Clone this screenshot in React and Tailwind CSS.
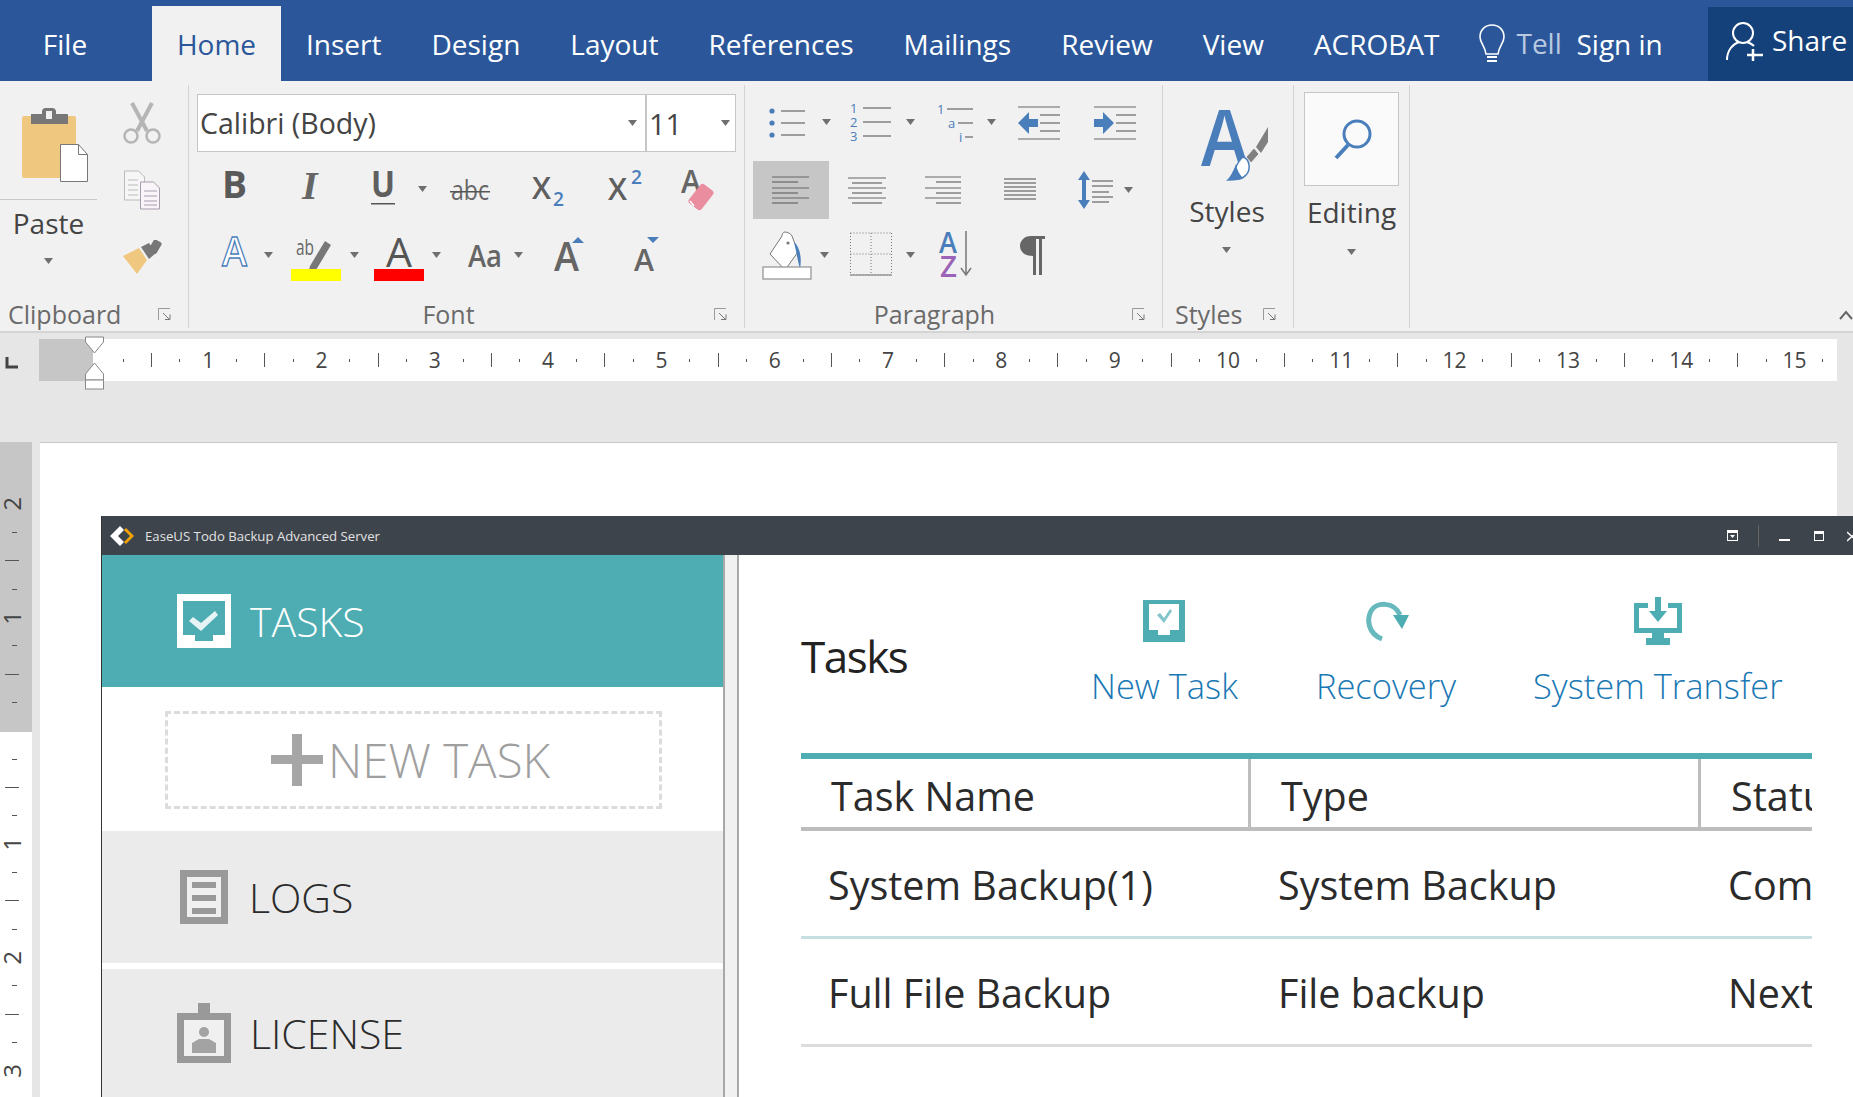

const B = '#4a7ebb', G = '#666666', TE = '#4dadb3';

function T({ x, y, size, fill = G, weight = 400, w, style, children }) {
  return (
    <text x={x} y={y} fontSize={size} fill={fill} fontWeight={weight} fontStyle={style}
      textLength={w} lengthAdjust={w ? 'spacingAndGlyphs' : undefined}>{children}</text>
  );
}

function Caret({ className = '' }) {
  return (
    <svg width="9" height="6" viewBox="0 0 9 6" className={'shrink-0 ' + className}>
      <polygon points="0,0 9,0 4.5,6" fill="#6f6f6f" />
    </svg>
  );
}

function Launcher() {
  return (
    <svg width="14" height="14" viewBox="0 0 14 14" className="shrink-0">
      <path d="M0.5 12V0.5H12" fill="none" stroke="#9a9a9a" />
      <path d="M5 5L11 11M7 11.5h5v-5" fill="none" stroke="#777" />
    </svg>
  );
}

function GroupLabel({ children, className = 'justify-center' }) {
  return (
    <div className={'relative mt-auto flex h-[26px] shrink-0 items-center pb-[2px] text-[25px] leading-none text-[#6a6a6a] ' + className}>
      <span>{children}</span>
      <span className="absolute right-[16px] top-[6px] flex"><Launcher /></span>
    </div>
  );
}

function Lines({ rows, stroke = G }) {
  return rows.map(([x1, x2, y], i) => <line key={i} x1={x1} x2={x2} y1={y} y2={y} stroke={stroke} strokeWidth="1.2" />);
}

function Clipboard() {
  return (
    <div className="flex h-[243px] w-[189px] shrink-0 flex-col border-r border-[#d4d4d4]">
      <div className="flex">
        <div className="flex w-[97px] flex-col items-center">
          <svg width="68" height="74" viewBox="0 0 68 74" className="ml-[13px] mt-[23px] shrink-0">
            <rect x="1" y="8" width="54" height="62" rx="2" fill="#efc77f" />
            <path d="M10 6h11V3a4 4 0 0 1 4-3h6a4 4 0 0 1 4 3v3h11a1 1 0 0 1 1 1v9H10z" fill="#777" />
            <rect x="25" y="3" width="6" height="8" fill="#f1f1f1" />
            <path d="M39.5 36.5h18l9 10v27h-27z" fill="#fff" stroke="#777" />
            <path d="M57.5 36.5v10h9" fill="none" stroke="#777" />
          </svg>
          <div className="mt-[17px] h-px w-full shrink-0 bg-[#c8c8c8]" />
          <div className="mt-[3px] flex h-[40px] items-center text-[28px] leading-none text-[#444]">Paste</div>
          <Caret className="mt-[15px]" />
        </div>
        <div className="ml-[26px] flex w-[40px] flex-col">
          <svg width="38" height="43" viewBox="0 0 38 43" className="mt-[17px] shrink-0">
            <path d="M9 1L24 29M29 1L14 29" stroke="#b5b5b5" strokeWidth="4" fill="none" />
            <circle cx="8" cy="34" r="6.5" fill="none" stroke="#b5b5b5" strokeWidth="2.5" />
            <circle cx="30" cy="34" r="6.5" fill="none" stroke="#b5b5b5" strokeWidth="2.5" />
          </svg>
          <svg width="38" height="40" viewBox="0 0 38 40" className="mt-[25px] shrink-0">
            <path d="M1.5 1h14l6 6v23h-20z" fill="#f6f6f6" stroke="#bbb" />
            <path d="M17.5 12h13l6 6v21h-19z" fill="#f8f4f8" stroke="#a89cad" />
            <path d="M5 10h10M5 15h10M5 20h10M5 25h10" stroke="#bbb" />
            <path d="M21 21h13M21 26h13M21 31h13M21 35h13" stroke="#a89cad" />
          </svg>
          <svg width="40" height="34" viewBox="0 0 40 34" className="mt-[30px] shrink-0">
            <polygon points="0,16 16,8 24,20 14,34" fill="#efc77f" />
            <polygon points="18,7 26,3 33,13 26,19" fill="#777" />
            <rect x="28" y="0" width="9" height="13" rx="2" transform="rotate(30 32 6)" fill="#777" />
          </svg>
        </div>
      </div>
      <GroupLabel className="justify-start pl-[8px]">Clipboard</GroupLabel>
    </div>
  );
}

function FontGroup() {
  return (
    <div className="flex h-[243px] w-[556px] shrink-0 flex-col border-r border-[#d4d4d4]">
      <div className="ml-[8px] mt-[9px] flex h-[58px] w-[539px] shrink-0 border border-[#c6c6c6] bg-white text-[#444]">
        <div className="flex flex-1 items-center justify-between border-r-2 border-[#c6c6c6] pr-[8px]">
          <span className="pl-[2px] text-[28.5px] leading-none">Calibri (Body)</span>
          <Caret />
        </div>
        <div className="flex w-[88px] items-center justify-between pr-[5px]">
          <span className="pl-[2px] text-[29px] leading-none">11</span>
          <Caret />
        </div>
      </div>
      <div className="mt-[15px] flex h-[44px] shrink-0 items-center">
        <svg width="26" height="44" className="ml-[33px] shrink-0"><T x="0" y="31" size="38" weight="700" fill="#5a5a5a" w="25">B</T></svg>
        <svg width="26" height="44" className="ml-[53px] shrink-0"><text x="1" y="32" fontSize="40" fontWeight="700" fontStyle="italic" fill="#666" style={{ fontFamily: '"Liberation Serif", serif' }}>I</text></svg>
        <svg width="28" height="44" className="ml-[43px] shrink-0"><T x="1" y="30" size="36" weight="700" fill="#5f5f5f" w="24">U</T><rect x="1" y="36" width="24" height="1.5" fill="#555" /></svg>
        <Caret className="ml-[20px]" />
        <svg width="42" height="44" className="ml-[23px] shrink-0"><T x="1" y="33" size="27" fill="#666" w="38">abc</T><rect x="0" y="24" width="40" height="1.5" fill="#555" /></svg>
        <svg width="36" height="44" className="ml-[40px] shrink-0"><T x="0" y="32" size="30" weight="600" fill="#5f5f5f" w="19">X</T><T x="21" y="39" size="19" weight="600" fill={B} w="11">2</T></svg>
        <svg width="38" height="44" className="ml-[40px] shrink-0"><T x="0" y="33" size="30" weight="600" fill="#5f5f5f" w="19">X</T><T x="23" y="17" size="19" weight="600" fill={B} w="11">2</T></svg>
        <svg width="38" height="46" className="ml-[35px] shrink-0">
          <T x="0" y="27" size="33" weight="600" fill="#666" w="20">A</T>
          <rect x="12" y="19" width="16" height="24" rx="3" transform="rotate(38 20 31)" fill="#ea8d9e" />
          <path d="M9 35l4 5" stroke="#fff" strokeWidth="1.5" />
        </svg>
      </div>
      <div className="mt-[17px] flex h-[54px] shrink-0 items-center">
        <svg width="28" height="54" className="ml-[32px] shrink-0"><text x="1" y="38" fontSize="40" fontWeight="600" fill="#fff" stroke={B} strokeWidth="1.3" textLength="25" lengthAdjust="spacingAndGlyphs">A</text></svg>
        <Caret className="ml-[15px]" />
        <svg width="50" height="54" className="ml-[18px] shrink-0">
          <T x="5" y="27" size="22" fill="#666" w="18">ab</T>
          <polygon points="19,38 34,13 40,17 25,42 18,42" fill="#777" />
          <rect x="0" y="41" width="50" height="12" fill="#ffff00" />
        </svg>
        <Caret className="ml-[9px]" />
        <svg width="50" height="54" className="ml-[15px] shrink-0">
          <T x="12" y="39" size="41" weight="400" fill="#555" w="26">A</T>
          <rect x="0" y="41" width="50" height="12" fill="#ff0000" />
        </svg>
        <Caret className="ml-[8px]" />
        <svg width="36" height="54" className="ml-[27px] shrink-0"><T x="0" y="39" size="31" weight="600" fill="#666" w="34">Aa</T></svg>
        <Caret className="ml-[10px]" />
        <svg width="32" height="54" className="ml-[31px] shrink-0">
          <T x="0" y="43" size="40" weight="600" fill="#666" w="25">A</T>
          <polygon points="18,15 30,15 24,9" fill={B} />
        </svg>
        <svg width="32" height="54" className="ml-[47px] shrink-0">
          <T x="1" y="43" size="30" weight="600" fill="#666" w="20">A</T>
          <polygon points="14,9 26,9 20,15" fill={B} />
        </svg>
      </div>
      <GroupLabel className="justify-center pr-[36px]">Font</GroupLabel>
    </div>
  );
}

function ListArrow({ dir }) {
  return dir === 'l'
    ? <polygon points="0,23 11,12 11,19 20,19 20,27 11,27 11,34" fill={B} />
    : <polygon points="20,23 9,12 9,19 0,19 0,27 9,27 9,34" fill={B} />;
}

function ParagraphGroup() {
  return (
    <div className="flex h-[243px] w-[418px] shrink-0 flex-col border-r border-[#d4d4d4]">
      <div className="mt-[17px] flex h-[40px] shrink-0 items-center">
        <svg width="38" height="40" className="ml-[23px] shrink-0">
          <circle cx="4" cy="9" r="2.6" fill={B} /><circle cx="4" cy="21" r="2.6" fill={B} /><circle cx="4" cy="33" r="2.6" fill={B} />
          <Lines rows={[[13, 37, 9], [13, 37, 21], [13, 37, 33]]} />
        </svg>
        <Caret className="ml-[16px]" />
        <svg width="42" height="40" className="ml-[19px] shrink-0">
          <T x="0" y="11" size="13" fill={B}>1</T><T x="0" y="25" size="13" fill={B}>2</T><T x="0" y="39" size="13" fill={B}>3</T>
          <Lines rows={[[13, 41, 6], [13, 41, 20], [13, 41, 34]]} />
        </svg>
        <Caret className="ml-[14px]" />
        <svg width="40" height="40" className="ml-[22px] shrink-0">
          <T x="0" y="12" size="13" fill={B}>1</T><T x="11" y="26" size="13" fill={B}>a</T><T x="22" y="40" size="13" fill={B}>i</T>
          <Lines rows={[[10, 36, 7], [21, 36, 21], [28, 36, 35]]} />
        </svg>
        <Caret className="ml-[10px]" />
        <svg width="43" height="40" className="ml-[22px] shrink-0">
          <Lines rows={[[0, 42, 5], [22, 42, 13], [22, 42, 21], [22, 42, 29], [0, 42, 37]]} />
          <g transform="translate(0,-2)"><ListArrow dir="l" /></g>
        </svg>
        <svg width="43" height="40" className="ml-[33px] shrink-0">
          <Lines rows={[[0, 42, 5], [22, 42, 13], [22, 42, 21], [22, 42, 29], [0, 42, 37]]} />
          <g transform="translate(0,-2)"><ListArrow dir="r" /></g>
        </svg>
      </div>
      <div className="mt-[19px] flex h-[58px] shrink-0 items-center">
        <div className="ml-[8px] flex h-[58px] w-[76px] items-center justify-center bg-[#c6c6c6]">
          <svg width="38" height="30" className="shrink-0"><Lines rows={[[0, 37, 2], [0, 26, 7], [0, 37, 13], [0, 26, 18], [0, 37, 23], [0, 26, 28]]} /></svg>
        </div>
        <svg width="40" height="30" className="ml-[18px] shrink-0"><Lines rows={[[1, 39, 3], [5, 35, 8], [1, 39, 13], [5, 35, 18], [1, 39, 23], [5, 35, 28]]} /></svg>
        <svg width="37" height="30" className="ml-[38px] shrink-0"><Lines rows={[[0, 36, 2], [11, 36, 7], [0, 36, 13], [11, 36, 18], [0, 36, 23], [11, 36, 28]]} /></svg>
        <svg width="33" height="24" className="ml-[42px] shrink-0"><Lines rows={[[0, 32, 1], [0, 32, 5], [0, 32, 9], [0, 32, 13], [0, 32, 17], [0, 32, 21]]} /></svg>
        <svg width="37" height="38" className="ml-[40px] shrink-0">
          <path d="M7 0L1 9h4v20H1l6 9 6-9H9V9h4z" fill={B} />
          <Lines rows={[[15, 36, 10], [15, 36, 15], [15, 32, 21], [15, 36, 26], [15, 32, 31]]} />
        </svg>
        <Caret className="ml-[10px]" />
      </div>
      <div className="mt-[11px] flex h-[50px] shrink-0 items-center">
        <svg width="52" height="50" className="ml-[17px] shrink-0">
          <path d="M23 2c-2 0-3 2-3 4l-12 18 15 16 13-18-6-16c-1-2-4-4-7-4z" fill="#fff" stroke="#777" />
          <circle cx="26" cy="13" r="1.6" fill="#777" />
          <path d="M32 12c6 5 8 16 6 27c-2-7-3-14-6-27z" fill={B} />
          <rect x="1" y="37" width="48" height="12" fill="#fff" stroke="#999" strokeWidth="1.3" />
        </svg>
        <Caret className="ml-[6px]" />
        <svg width="42" height="50" className="ml-[21px] shrink-0">
          <path d="M0.5 3H41.5M0.5 45H41.5M21 3V45M0.5 24H41.5M0.5 3V45M41.5 3V45" stroke="#777" strokeDasharray="1 2" fill="none" />
          <path d="M0 45H42" stroke="#777" />
        </svg>
        <Caret className="ml-[14px]" />
        <svg width="36" height="50" className="ml-[24px] shrink-0">
          <T x="0" y="23" size="28" weight="600" fill={B} w="18">A</T>
          <T x="1" y="47" size="28" weight="600" fill="#9b63b8" w="17">Z</T>
          <path d="M27 1V45M22 38l5 7 5-7" stroke="#777" fill="none" strokeWidth="1.5" />
        </svg>
        <svg width="28" height="44" className="ml-[44px] shrink-0">
          <path d="M12 3h14v3h-3v36h-3V6h-3v36h-3V23C5 23 1 18 1 13S5 3 12 3z" fill="#666" />
        </svg>
      </div>
      <GroupLabel className="justify-center pr-[38px]">Paragraph</GroupLabel>
    </div>
  );
}

function StylesGroup() {
  return (
    <div className="flex h-[243px] w-[131px] shrink-0 flex-col border-r border-[#d4d4d4]">
      <svg width="72" height="72" className="ml-[36px] mt-[25px] shrink-0">
        <T x="2" y="56" size="82" weight="600" fill={B} w="47">A</T>
        <polygon points="57,37 69,17 69,32 62,43" fill="#808080" />
        <polygon points="47,47 55,38 60,44 52,53" fill="#808080" stroke="#f1f1f1" strokeWidth="1" />
        <path d="M44 47c7 2 8 13 3 18c-4 5-12 5-18 5c6-5 8-18 15-23z" fill="#fff" stroke={B} strokeWidth="1.5" />
        <path d="M37 54c1 6 3 10 7 14c-4 2-10 2-15 2c4-4 6-10 8-16z" fill={B} />
      </svg>
      <div className="mt-[11px] flex h-[36px] shrink-0 items-center justify-center pr-[2px] text-[28px] leading-none text-[#444]">Styles</div>
      <div className="mt-[18px] flex justify-center pr-[3px]"><Caret /></div>
      <GroupLabel className="justify-start pl-[12px]">Styles</GroupLabel>
    </div>
  );
}

function EditingGroup() {
  return (
    <div className="flex h-[243px] w-[116px] shrink-0 flex-col items-center border-r border-[#d4d4d4]">
      <div className="mt-[7px] flex h-[94px] w-[95px] shrink-0 items-center justify-center border border-[#c6c6c6] bg-[#fafafa]">
        <svg width="42" height="42" viewBox="0 0 42 42" className="shrink-0">
          <circle cx="26" cy="16" r="13" fill="none" stroke={B} strokeWidth="3" />
          <path d="M17 27L5 40" stroke={B} strokeWidth="4" />
        </svg>
      </div>
      <div className="mt-[8px] flex h-[36px] shrink-0 items-center text-[28px] leading-none text-[#444]">Editing</div>
      <div className="mt-[19px] flex"><Caret /></div>
    </div>
  );
}

const TICK_S = <span className="h-[3px] w-px bg-[#555]" />;
const TICK_L = <span className="h-[14px] w-px bg-[#555]" />;

function HRuler() {
  const cells = [];
  for (let n = 1; n <= 15; n++) {
    cells.push('s', 'l', 's', n);
  }
  cells.push('s');
  return (
    <div className="relative flex h-[42px] items-center">
      <div className="ml-[5px] flex h-[42px] w-[34px] items-center">
        <svg width="14" height="14" className="mt-[6px] shrink-0"><path d="M2 1V11H13" fill="none" stroke="#444" strokeWidth="3" /></svg>
      </div>
      <div className="h-[42px] w-[54px] bg-[#c6c6c6]" />
      <div className="flex h-[42px] w-[1744px] items-center overflow-hidden bg-white pl-[16px]">
        {cells.map((c, i) => (
          <div key={i} className="flex h-[42px] w-[28.33px] shrink-0 items-center justify-center text-[21px] leading-none text-[#444]">
            {c === 's' ? TICK_S : c === 'l' ? TICK_L : c}
          </div>
        ))}
      </div>
      <svg width="24" height="56" viewBox="0 0 24 56" className="absolute left-[83px] top-[-3px]">
        <path d="M2.5 1H20.5V6L11.5 17L2.5 6Z" fill="#fff" stroke="#888" />
        <path d="M2.5 38L11.5 27L20.5 38V44H2.5Z" fill="#fff" stroke="#888" />
        <rect x="2.5" y="44" width="18" height="9" fill="#fff" stroke="#888" />
      </svg>
    </div>
  );
}

function VRuler() {
  const mark = (c, i) => (
    <div key={i} className="flex h-[28.35px] w-[24px] shrink-0 items-center justify-center text-[24px] leading-none text-[#444]">
      {c === 's' ? <span className="ml-[4px] h-px w-[5px] bg-[#555]" /> : c === 'l' ? <span className="h-px w-[14px] bg-[#555]" /> : <span className="-rotate-90">{c}</span>}
    </div>
  );
  return (
    <div className="flex w-[32px] shrink-0 flex-col overflow-hidden">
      <div className="h-[290px] shrink-0 bg-[#c6c6c6] pt-[48px]">{[2, 's', 'l', 's', 1, 's', 'l', 's'].map(mark)}</div>
      <div className="flex-1 bg-white pt-[13px]">{['s', 'l', 's', 1, 's', 'l', 's', 2, 's', 'l', 's', 3, 's'].map(mark)}</div>
    </div>
  );
}

function SideItem({ className, icon, text, textClass }) {
  return (
    <div className={'flex shrink-0 items-center ' + className}>
      {icon}
      <span className={'text-[41px] font-light leading-none ' + textClass}>{text}</span>
    </div>
  );
}

function Sidebar() {
  return (
    <div className="flex w-[621px] shrink-0 flex-col">
      <SideItem className="h-[132px] bg-[#4dadb3] pl-[75px]" textClass="ml-[19px] text-white" text="TASKS"
        icon={<svg width="54" height="54" viewBox="0 0 54 54" className="shrink-0">
          <path d="M0 0H54V54H0Z" fill="#fff" />
          <path d="M6 7H48V41H36V47H18V41H6Z" fill="#4dadb3" />
          <path d="M12 27l4-4 8 6 14-12 3 4-17 16z" fill="#e6f4f5" />
        </svg>} />
      <div className="flex h-[144px] shrink-0 items-start bg-white pl-[63px] pt-[24px]">
        <div className="flex h-[98px] w-[497px] items-center border-[3px] border-dashed border-[#dcdcdc] pl-[103px]">
          <svg width="52" height="52" viewBox="0 0 52 52" className="shrink-0">
            <path d="M21 0h10v21h21v9H31v22H21V30H0v-9h21z" fill="#a6a6a6" />
          </svg>
          <span className="ml-[5px] text-[47.5px] font-light leading-none text-[#9f9f9f]">NEW TASK</span>
        </div>
      </div>
      <SideItem className="h-[132px] bg-[#ebebeb] pl-[78px]" textClass="ml-[21px] text-[#2b2b2b]" text="LOGS"
        icon={<svg width="48" height="54" viewBox="0 0 48 54" className="shrink-0">
          <rect x="3.5" y="3.5" width="41" height="47" fill="#f0f0f0" stroke="#999" strokeWidth="7" />
          <path d="M12 12h24v6H12zM12 25h24v6H12zM12 38h24v6H12z" fill="#999" />
        </svg>} />
      <div className="h-[6px] shrink-0 bg-white" />
      <SideItem className="h-[128px] bg-[#ebebeb] pl-[75px]" textClass="ml-[19px] text-[#2b2b2b]" text="LICENSE"
        icon={<svg width="54" height="60" viewBox="0 0 54 60" className="shrink-0">
          <rect x="21" y="0" width="12" height="14" fill="#999" />
          <rect x="3.5" y="13.5" width="47" height="43" fill="#f0f0f0" stroke="#999" strokeWidth="7" />
          <circle cx="27" cy="29" r="5" fill="#a3a3a3" />
          <path d="M15 50V40l7-4h10l7 4v10z" fill="#a3a3a3" />
        </svg>} />
    </div>
  );
}

function Action({ icon, label, className }) {
  return (
    <div className={'flex flex-col items-center ' + className}>
      <div className="flex h-[48px] items-center">{icon}</div>
      <div className="mt-[19px] whitespace-nowrap text-[34.5px] font-light leading-[44px] text-[#1a78b4]">{label}</div>
    </div>
  );
}

function Content() {
  const row = 'grid shrink-0 grid-cols-[450px_450px_111px] text-[#2b2b2b]';
  return (
    <div className="flex min-w-0 flex-1 flex-col bg-white pl-[62px] pr-[41px]">
      <div className="flex h-[198px] shrink-0 items-start">
        <div className="mt-[76px] w-[290px] shrink-0 text-[44px] font-normal leading-[50px] tracking-[-1.5px] text-[#222]">Tasks</div>
        <Action className="mt-[42px]" label="New Task" icon={
          <svg width="42" height="42" viewBox="0 0 42 42" className="shrink-0">
            <path d="M0 0H42V42H0Z" fill={TE} />
            <path d="M6 4H36V30H27V35H15V30H6Z" fill="#fff" />
            <path d="M14 15l3-2 4 5 6-9 2 2-8 12z" fill={TE} opacity="0.7" />
          </svg>} />
        <Action className="ml-[78px] mt-[42px]" label="Recovery" icon={
          <svg width="48" height="42" viewBox="0 0 48 42" className="shrink-0">
            <path d="M20 39C7 34 4 21 9 11C14 2 32 1 38 15" fill="none" stroke={TE} strokeWidth="5" opacity="0.85" />
            <polygon points="31,15 47,15 40,29" fill={TE} />
          </svg>} />
        <Action className="ml-[77px] mt-[42px]" label="System Transfer" icon={
          <svg width="48" height="48" viewBox="0 0 48 48" className="shrink-0">
            <path d="M0 6H14V11H5V31H43V11H34V6H48V36H30V41H36V48H12V41H18V36H0Z" fill={TE} />
            <path d="M21 0H27V14H33L24 25L15 14H21Z" fill={TE} />
          </svg>} />
      </div>
      <div className="h-[6px] w-[1011px] shrink-0 bg-[#4dadb3]" />
      <div className={row + ' h-[72px] w-[1011px] items-center overflow-hidden border-b-[4px] border-[#bdbdbd] text-[39.5px] leading-none'}>
        <div className="flex h-full items-center whitespace-nowrap border-r-[3px] border-[#bdbdbd] pl-[30px] pt-[7px]">Task Name</div>
        <div className="flex h-full items-center whitespace-nowrap border-r-[3px] border-[#bdbdbd] pl-[30px] pt-[7px]">Type</div>
        <div className="whitespace-nowrap pl-[30px] pt-[7px]">Status</div>
      </div>
      <div className={row + ' h-[108px] w-[1011px] items-center overflow-hidden border-b-[3px] border-[#c6e0e2] pt-[4px] text-[39.5px] leading-none'}>
        <div className="whitespace-nowrap pl-[27px]">System Backup(1)</div>
        <div className="whitespace-nowrap pl-[27px]">System Backup</div>
        <div className="whitespace-nowrap pl-[27px]">Completed</div>
      </div>
      <div className={row + ' h-[108px] w-[1011px] items-center overflow-hidden border-b-[3px] border-[#dcdcdc] pt-[4px] text-[39.5px] leading-none'}>
        <div className="whitespace-nowrap pl-[27px]">Full File Backup</div>
        <div className="whitespace-nowrap pl-[27px]">File backup</div>
        <div className="whitespace-nowrap pl-[27px]">Next</div>
      </div>
    </div>
  );
}

function AppWindow() {
  return (
    <div className="ml-[61px] flex h-[581px] w-[1752px] flex-col overflow-hidden border-l border-[#333]">
      <div className="flex h-[39px] shrink-0 items-center bg-[#3e444c] text-[13.2px] leading-none text-[#e2e2e2]">
        <svg width="24" height="20" viewBox="0 0 24 20" className="ml-[8px] shrink-0">
          <path d="M10 0L0 10l10 10 4-4-6-6 6-6z" fill="#fff" />
          <path d="M14 4l6 6-6 6 2 2 8-8-8-8z" fill="#f5a300" />
        </svg>
        <span className="ml-[11px] pt-[2px]">EaseUS Todo Backup Advanced Server</span>
        <div className="ml-auto flex items-center">
          <svg width="11" height="11" className="shrink-0"><rect x="0.5" y="0.5" width="10" height="10" fill="none" stroke="#fff" /><rect x="0" y="0" width="11" height="3" fill="#fff" /><polygon points="3,5 8,5 5.5,8" fill="#fff" /></svg>
          <div className="ml-[20px] h-[22px] w-px bg-[#666]" />
          <svg width="12" height="12" className="ml-[20px] shrink-0"><rect x="0" y="9" width="11" height="2" fill="#fff" /></svg>
          <svg width="11" height="12" className="ml-[23px] shrink-0"><rect x="0.5" y="1.5" width="9" height="9" fill="none" stroke="#fff" /><rect x="0" y="1" width="10" height="3" fill="#fff" /></svg>
          <svg width="8" height="12" className="ml-[22px] mr-[-2px] shrink-0"><path d="M0 2L10 11M10 2L0 11" stroke="#fff" strokeWidth="1.5" /></svg>
        </div>
      </div>
      <div className="flex min-h-0 flex-1">
        <Sidebar />
        <div className="h-full w-[16px] shrink-0 border-x-2 border-[#a8a8a8] bg-[#f1f1f1]" />
        <Content />
      </div>
    </div>
  );
}

const TABS = [
  ['Insert', 'ml-[25px]'], ['Design', 'ml-[50px]'], ['Layout', 'ml-[50px]'], ['References', 'ml-[50px]'],
  ['Mailings', 'ml-[50px]'], ['Review', 'ml-[50px]'], ['View', 'ml-[50px]'], ['ACROBAT', 'ml-[50px]'],
];

export default function App() {
  return (
    <div className="flex h-[1097px] w-[1853px] flex-col overflow-hidden bg-[#e6e6e6] font-['Open_Sans','Noto_Sans',sans-serif]">
      <div className="flex h-[81px] shrink-0 items-end bg-[#2b579a] text-[28px] leading-none text-white">
        <div className="flex h-[75px] w-[152px] items-center justify-center pr-[22px]">File</div>
        <div className="flex h-[75px] w-[129px] items-center justify-center bg-[#f1f1f1] text-[#2b579a]">Home</div>
        {TABS.map(([t, m]) => (
          <div key={t} className={'flex h-[75px] items-center ' + m}>{t}</div>
        ))}
        <svg width="28" height="40" viewBox="0 0 28 40" className="mb-[17px] ml-[39px] shrink-0">
          <path d="M14 1C7 1 2 6 2 13c0 6 5 9 6 17h12c1-8 6-11 6-17C26 6 21 1 14 1z" fill="none" stroke="#fff" strokeWidth="1.6" />
          <path d="M9 33h10M9 37h10" stroke="#fff" strokeWidth="2" />
        </svg>
        <div className="mb-[24px] ml-[10px] w-[60px] text-[#b9c9e0]">Tell</div>
        <div className="flex h-[75px] items-center whitespace-nowrap">Sign in</div>
        <div className="ml-auto flex h-[74px] w-[145px] items-center bg-[#15417a] pl-[17px]">
          <svg width="40" height="42" viewBox="0 0 40 42" className="mb-[6px] shrink-0">
            <circle cx="18" cy="13" r="10" fill="none" stroke="#fff" strokeWidth="2" />
            <path d="M2 40C2 30 8 24 14 22M22 22c3 1 5 2 7 4" fill="none" stroke="#fff" strokeWidth="2" />
            <path d="M28 29V41M22 35H38" stroke="#fff" strokeWidth="2.5" />
          </svg>
          <span className="mb-[8px] ml-[7px]">Share</span>
        </div>
      </div>

      <div className="relative flex h-[252px] shrink-0 border-b-2 border-[#d4d4d4] bg-[#f1f1f1] pt-[4px]">
        <Clipboard />
        <FontGroup />
        <ParagraphGroup />
        <StylesGroup />
        <EditingGroup />
        <svg width="14" height="10" className="absolute right-0 top-[229px]"><path d="M1 9L7 2L13 9" fill="none" stroke="#666" strokeWidth="2" /></svg>
      </div>

      <div className="h-[109px] shrink-0 pt-[6px]">
        <HRuler />
      </div>

      <div className="flex min-h-0 flex-1">
        <VRuler />
        <div className="ml-[8px] h-full w-[1797px] shrink-0 border-t border-[#c8c8c8] bg-white pt-[73px]">
          <AppWindow />
        </div>
      </div>
    </div>
  );
}
